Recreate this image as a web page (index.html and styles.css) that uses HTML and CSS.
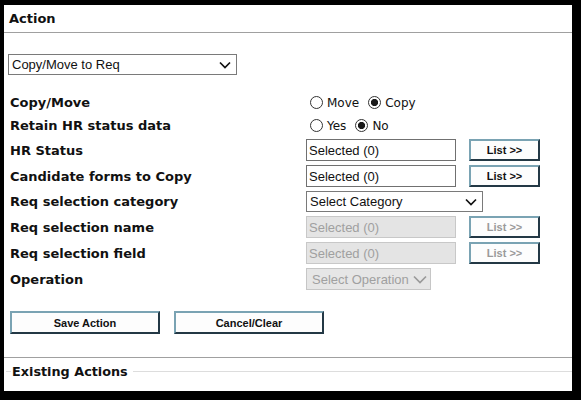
FILE: index.html
```html
<!DOCTYPE html>
<html>
<head>
<meta charset="utf-8">
<link rel="stylesheet" href="styles.css">
</head>
<body>
<div class="panel">
  <div class="head">Action</div>

  <div class="sel sel-main">
    <select class="dd"><option>Copy/Move to Req</option></select>
    <svg class="chev" width="12" height="8" viewBox="0 0 12 8"><polyline points="1,1.5 6,6.5 11,1.5" fill="none" stroke="#111" stroke-width="1.7"/></svg>
  </div>

  <div class="form">
    <div class="lbl">Copy/Move</div>
    <div class="radios">
      <label class="opt"><input type="radio" name="cm" class="rb">Move</label>
      <label class="opt"><input type="radio" name="cm" class="rb" checked>Copy</label>
    </div>

    <div class="lbl">Retain HR status data</div>
    <div class="radios">
      <label class="opt"><input type="radio" name="rt" class="rb">Yes</label>
      <label class="opt"><input type="radio" name="rt" class="rb" checked>No</label>
    </div>

    <div class="lbl">HR Status</div>
    <div class="ctl">
      <input class="txt" type="text" value="Selected (0)" readonly>
      <button class="btn list">List &gt;&gt;</button>
    </div>

    <div class="lbl">Candidate forms to Copy</div>
    <div class="ctl">
      <input class="txt" type="text" value="Selected (0)" readonly>
      <button class="btn list">List &gt;&gt;</button>
    </div>

    <div class="lbl">Req selection category</div>
    <div class="ctl">
      <div class="sel sel-cat">
        <select class="dd"><option>Select Category</option></select>
        <svg class="chev" width="12" height="8" viewBox="0 0 12 8"><polyline points="1,1.5 6,6.5 11,1.5" fill="none" stroke="#111" stroke-width="1.7"/></svg>
      </div>
    </div>

    <div class="lbl">Req selection name</div>
    <div class="ctl">
      <input class="txt" type="text" value="Selected (0)" disabled>
      <button class="btn list" disabled>List &gt;&gt;</button>
    </div>

    <div class="lbl">Req selection field</div>
    <div class="ctl">
      <input class="txt" type="text" value="Selected (0)" disabled>
      <button class="btn list" disabled>List &gt;&gt;</button>
    </div>

    <div class="lbl">Operation</div>
    <div class="ctl">
      <div class="sel sel-op">
        <select class="dd" disabled><option>Select Operation</option></select>
        <svg class="chev" width="14" height="9" viewBox="0 0 14 9"><polyline points="1,1.5 7,7.5 13,1.5" fill="none" stroke="#9a9a9a" stroke-width="1.7"/></svg>
      </div>
    </div>
  </div>

  <div class="actions">
    <button class="btn wide">Save Action</button>
    <button class="btn wide">Cancel/Clear</button>
  </div>

  <div class="divider"></div>

  <div class="existing">
    <span class="seg"></span>
    <span class="legend">Existing Actions</span>
    <span class="rule"></span>
  </div>
</div>
</body>
</html>
```

FILE: styles.css
```css
html, body {
  margin: 0;
  padding: 0;
}

body {
  background: #000;
  font-family: "DejaVu Sans", Verdana, sans-serif;
  color: #111;
}

.panel {
  background: #fff;
  margin: 5px 0 0 4px;
  width: 568px;
  height: 386px;
  overflow: hidden;
}

.head {
  box-sizing: border-box;
  height: 28px;
  padding: 6px 5px 0;
  border-bottom: 1px solid #a0a0a0;
  font-weight: bold;
  font-size: 13px;
  line-height: 16px;
}

.sel {
  position: relative;
  display: inline-block;
}

.sel-main {
  display: block;
  margin: 21px 0 0 4px;
  width: 229px;
  height: 21px;
}

.dd {
  appearance: none;
  -webkit-appearance: none;
  box-sizing: border-box;
  width: 100%;
  height: 100%;
  margin: 0;
  border: 1px solid #7a7a7a;
  border-radius: 0;
  background: #fff;
  font-family: "Liberation Sans", Arial, sans-serif;
  font-size: 13px;
  color: #111;
  padding: 0 0 0 3px;
}

.dd:disabled {
  background: #e6e6e6;
  border-color: #c6c6c6;
  color: #a0a0a0;
  opacity: 1;
}

.chev {
  position: absolute;
  right: 6px;
  top: 7px;
}

.sel-cat {
  width: 177px;
  height: 21px;
}

.sel-op {
  width: 125px;
  height: 22px;
}

.sel-op .dd {
  padding-left: 5px;
}

.sel-op .chev {
  right: 4px;
  top: 7px;
}

.form {
  display: grid;
  grid-template-columns: 296px auto;
  grid-template-rows: 19px 19px 22px 22px 21px 22px 22px 22px;
  row-gap: 4px;
  margin-top: 18px;
  padding-left: 6px;
}

.lbl {
  display: flex;
  align-items: center;
  font-weight: bold;
  font-size: 13px;
  color: #111;
}

.radios {
  display: flex;
  align-items: center;
  gap: 9px;
  padding-left: 4px;
  font-size: 12px;
  color: #111;
}

.opt {
  display: flex;
  align-items: center;
}

.rb {
  appearance: none;
  -webkit-appearance: none;
  box-sizing: border-box;
  width: 13px;
  height: 13px;
  margin: 0 4px 0 0;
  border: 1px solid #333;
  border-radius: 50%;
  background: #fff;
}

.rb:checked {
  background: radial-gradient(circle, #1a1a1a 0 3.3px, #fff 3.9px);
}

.ctl {
  display: flex;
  align-items: stretch;
}

.txt {
  box-sizing: border-box;
  width: 150px;
  height: 22px;
  margin: 0;
  padding: 0 2px;
  border: 1px solid #707070;
  border-radius: 0;
  background: #fff;
  font-family: "Liberation Sans", Arial, sans-serif;
  font-size: 13px;
  color: #111;
  outline: none;
}

.txt:disabled {
  background: #e4e4e4;
  border-color: #c8c8c8;
  color: #a0a0a0;
}

.btn {
  box-sizing: border-box;
  margin: 0;
  padding: 0;
  background: #fdfdfd;
  border-style: solid;
  border-width: 2px;
  border-color: #7aa3b3 #233845 #233845 #7aa3b3;
  border-radius: 0;
  font-family: "Liberation Sans", Arial, sans-serif;
  font-weight: bold;
  font-size: 11px;
  color: #111;
}

.btn:disabled {
  color: #9a9a9a;
}

.list {
  width: 71px;
  height: 22px;
  margin-left: 13px;
}

.actions {
  display: flex;
  gap: 14px;
  margin-top: 21px;
  padding-left: 6px;
}

.wide {
  width: 150px;
  height: 23px;
}

.divider {
  margin-top: 23px;
  border-top: 1px solid #a0a0a0;
}

.existing {
  display: flex;
  align-items: center;
  height: 27px;
}

.seg {
  width: 5px;
  margin-left: 2px;
  border-top: 1px solid #ddd;
}

.legend {
  padding: 0 5px 0 1px;
  font-weight: bold;
  font-size: 12.8px;
  color: #111;
}

.rule {
  flex: 1;
  border-top: 1px solid #ddd;
}
```
